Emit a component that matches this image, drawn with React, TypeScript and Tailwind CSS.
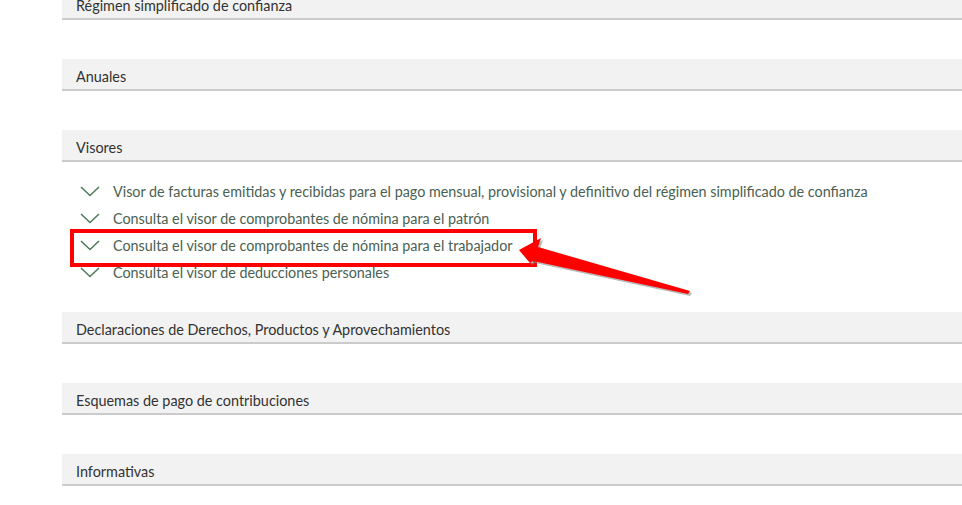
const sections = [
  { title: 'Régimen simplificado de confianza' },
  { title: 'Anuales' },
  {
    title: 'Visores',
    items: [
      'Visor de facturas emitidas y recibidas para el pago mensual, provisional y definitivo del régimen simplificado de confianza',
      'Consulta el visor de comprobantes de nómina para el patrón',
      'Consulta el visor de comprobantes de nómina para el trabajador',
      'Consulta el visor de deducciones personales',
    ],
  },
  { title: 'Declaraciones de Derechos, Productos y Aprovechamientos' },
  { title: 'Esquemas de pago de contribuciones' },
  { title: 'Informativas' },
]

function Chevron() {
  return (
    <svg width="20" height="11" viewBox="0 0 20 11" className="shrink-0">
      <path d="M1 1 L10 9.5 L19 1" fill="none" stroke="#4f7d57" strokeWidth="1.6" />
    </svg>
  )
}

export default function App() {
  return (
    <main
      className="relative min-h-[505px] w-[962px] overflow-hidden bg-white pl-[62px]"
      style={{ fontFamily: 'Lato, "Open Sans", sans-serif' }}
    >
      <div className="-mt-[12px]">
        {sections.map(s => (
          <section key={s.title} className={s.items ? '' : 'mb-[39px]'}>
            <div className="flex h-[32px] items-center border-b-2 border-[#cbcbcb] bg-[#f2f2f2] pt-[5px] pl-[14px] text-[14.4px] text-[#333]">
              {s.title}
            </div>
            {s.items && (
              <ul className="pt-[16px] pb-[26px]">
                {s.items.map(item => (
                  <li key={item} className="flex h-[27px] items-center gap-[13px] pl-[18px] text-[14.35px] text-[#4a6152]">
                    <Chevron />
                    <span>{item}</span>
                  </li>
                ))}
              </ul>
            )}
          </section>
        ))}
      </div>

      {/* highlight box */}
      <div className="absolute left-[70px] top-[229px] h-[38px] w-[467px] border-4 border-[#ff0000]" />

      {/* arrow */}
      <svg className="absolute left-0 top-0" width="962" height="505" viewBox="0 0 962 505">
        <polygon
          points="519,250 541,238 538,247 690,291 688,294 533,261 530,263"
          fill="#8a8a8a"
          opacity="0.6"
          transform="translate(2,2)"
        />
        <polygon points="519,250 541,238 538,247 690,291 688,294 533,261 530,263" fill="#ff0000" />
      </svg>
    </main>
  )
}
